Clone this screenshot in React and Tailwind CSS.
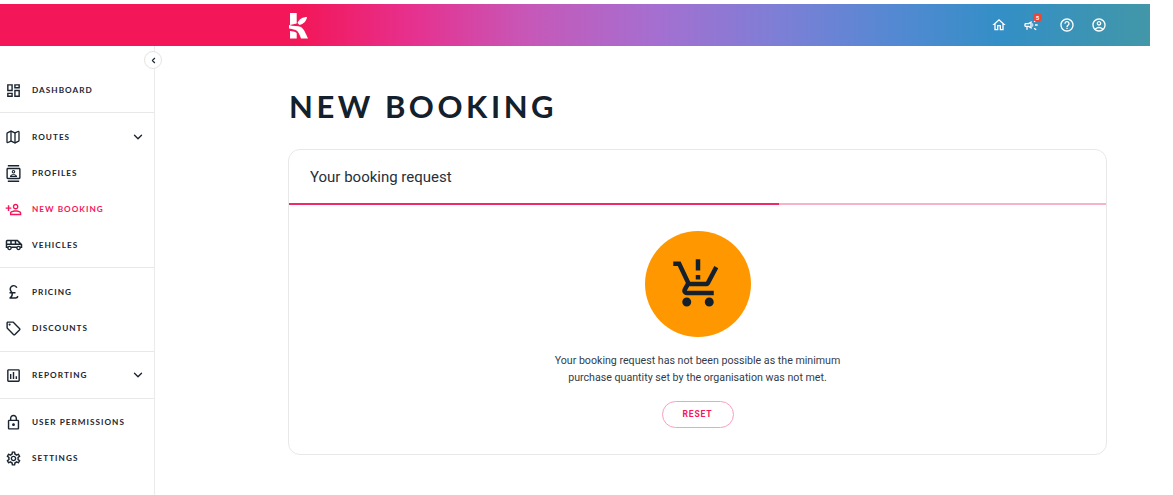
import React from "react";
import { ChevronDown, ChevronLeft, Map as MapIcon } from "lucide-react";
import {
  MdOutlineDashboard,
  MdOutlineContacts,
  MdOutlinePersonAddAlt,
  MdOutlineAirportShuttle,
  MdCurrencyPound,
  MdOutlineLocalOffer,
  MdOutlineAssessment,
  MdOutlineLock,
  MdOutlineSettings,
  MdOutlineHome,
  MdOutlineCampaign,
  MdHelpOutline,
  MdOutlineAccountCircle,
  MdProductionQuantityLimits,
} from "react-icons/md";

const GROUPS = [
  { cls: "pt-[26px] pb-[4px]", items: [{ label: "Dashboard", icon: MdOutlineDashboard }] },
  {
    cls: "pt-[6px] pb-[4px]",
    items: [
      { label: "Routes", icon: MapIcon, lucide: true, more: true },
      { label: "Profiles", icon: MdOutlineContacts },
      { label: "New Booking", icon: MdOutlinePersonAddAlt, active: true },
      { label: "Vehicles", icon: MdOutlineAirportShuttle, size: 18 },
    ],
  },
  {
    cls: "pt-[6px] pb-[5px]",
    items: [
      { label: "Pricing", icon: MdCurrencyPound, size: 18 },
      { label: "Discounts", icon: MdOutlineLocalOffer },
    ],
  },
  { cls: "py-[5px]", items: [{ label: "Reporting", icon: MdOutlineAssessment, more: true }] },
  {
    cls: "pt-[5px]",
    last: true,
    items: [
      { label: "User Permissions", icon: MdOutlineLock },
      { label: "Settings", icon: MdOutlineSettings },
    ],
  },
];

function NavItem({ label, icon: Icon, lucide, more, active, size = 17 }) {
  return (
    <a className={`flex h-9 items-center pl-[5px] pr-[9px] ${active ? "text-[#f5175a]" : "text-[#1b2530]"}`}>
      <span className="flex w-[27px] shrink-0 items-center">
        {lucide ? (
          <Icon size={16} strokeWidth={2} />
        ) : (
          <Icon size={size} className={active ? "-scale-x-100" : ""} />
        )}
      </span>
      <span className="flex-1 pt-px text-[8.2px] font-bold uppercase tracking-[0.125em]">{label}</span>
      {more && <ChevronDown size={14} strokeWidth={2.4} />}
    </a>
  );
}

function Logo() {
  return (
    <svg width="21" height="27" viewBox="0 0 21 27" fill="#fff" aria-label="logo">
      <path d="M2 1h6.700v10.500L2 13z" />
      <path d="M9.500 11C11 7 15 5 19 5c-.5 4-3.500 7-7.500 8z" />
      <path d="M1 13c4 1.500 9 .5 12 2 3 2 5 7 7 11.500h-7C11.500 22 10 19 7.500 18 5 17 2.500 17 1 16.500z" />
      <path d="M2 19c2 .3 5 .5 6.700 2v5.500H2z" />
    </svg>
  );
}

export default function App() {
  return (
    <div className="h-[495px] w-[1150px] overflow-hidden bg-white pt-[4px] font-['Lato',sans-serif] text-[#1b2530]">
      <header className="flex h-[42px] items-center bg-[linear-gradient(90deg,#f31658_0%,#f31658_26%,#e6318f_36%,#c658b8_46%,#a56fd0_57%,#7c7fd6_68%,#5389d2_78%,#338fc6_87%,#4297a8_100%)] pl-[288px] pr-[43px]">
        <Logo />
        <div className="ml-auto flex items-center gap-[16px] text-white">
          <MdOutlineHome size={16} />
          <span className="relative mr-[4px] flex">
            <MdOutlineCampaign size={16} />
            <span className="absolute -right-[3px] -top-[4px] flex h-[9px] w-[9px] items-center justify-center rounded-full bg-[#f04438] font-['Roboto',sans-serif] text-[6px] font-bold leading-none text-white">
              5
            </span>
          </span>
          <MdHelpOutline size={16} />
          <MdOutlineAccountCircle size={16} />
        </div>
      </header>

      <div className="flex h-[449px]">
        <aside className="relative w-[155px] shrink-0 border-r border-[#ebebeb]">
          <button className="absolute -right-[8px] top-[5px] flex h-[18px] w-[18px] items-center justify-center rounded-full border border-[#e4e4e4] bg-white">
            <ChevronLeft size={9} strokeWidth={3} />
          </button>
          {GROUPS.map((g) => (
            <div key={g.items[0].label} className={`${g.cls} ${g.last ? "" : "border-b border-[#e8e8e8]"}`}>
              {g.items.map((item) => (
                <NavItem key={item.label} {...item} />
              ))}
            </div>
          ))}
        </aside>

        <main className="flex-1 pl-[133px] pr-[43px] pt-[42px]">
          <h1 className="mb-[27px] h-[34px] pl-px text-[31px] font-bold uppercase leading-[36px] tracking-[0.115em] text-[#14202b]">
            New Booking
          </h1>
          <section className="h-[306px] rounded-xl border border-[#e8e8e8] font-['Roboto',sans-serif]">
            <h2 className="flex h-[53px] items-center pl-[21px] pt-[2px] text-[15px] font-normal text-[#26303a]">
              Your booking request
            </h2>
            <div className="flex h-[2px] bg-[#f9b0ca]">
              <div className="h-full w-[60%] bg-[#ef2a68]" />
            </div>
            <div className="flex flex-col items-center pt-[26px]">
              <div className="flex h-[106px] w-[106px] items-center justify-center rounded-full bg-[#ff9800] text-[#14202b]">
                <MdProductionQuantityLimits size={54} />
              </div>
              <p className="mt-[15px] text-center text-[10.65px] leading-[17px] text-[#333c4a]">
                Your booking request has not been possible as the minimum
                <br />
                purchase quantity set by the organisation was not met.
              </p>
              <button className="mt-[15px] flex h-[27px] w-[72px] items-center justify-center rounded-full border border-[#f9a0bc] text-[8.5px] font-bold tracking-[0.1em] text-[#f5175a]">
                RESET
              </button>
            </div>
          </section>
        </main>
      </div>
    </div>
  );
}
